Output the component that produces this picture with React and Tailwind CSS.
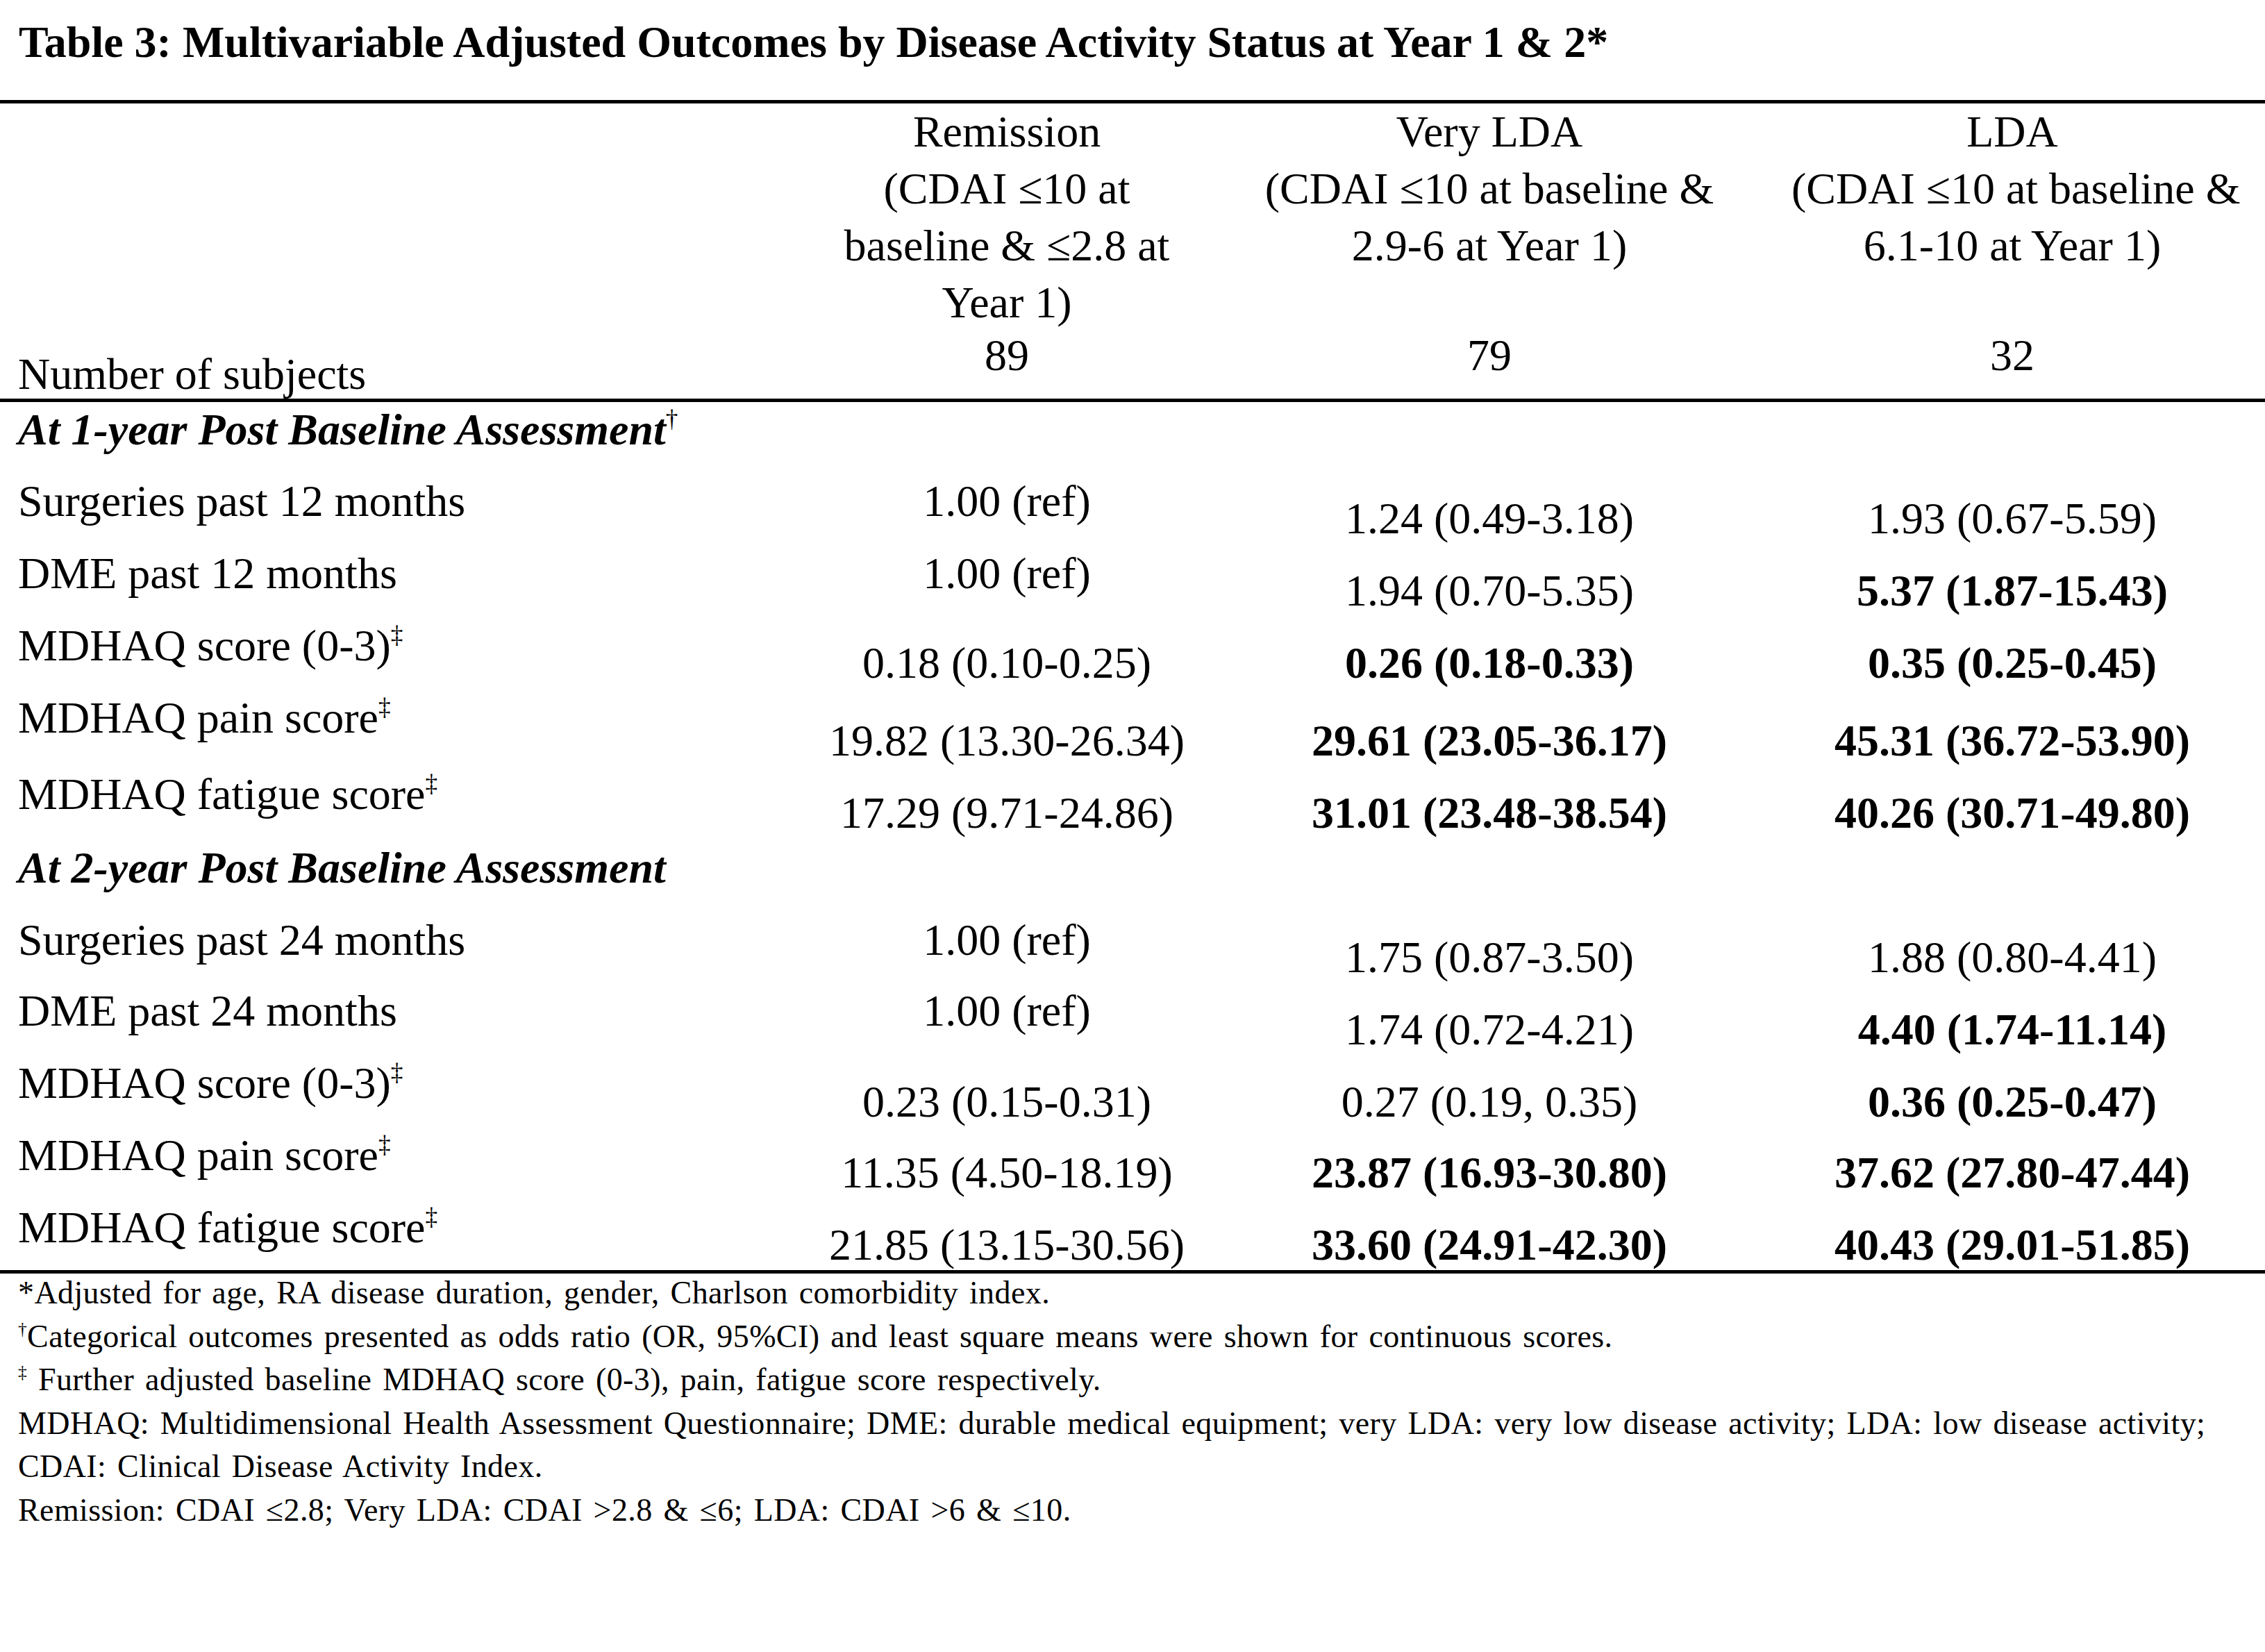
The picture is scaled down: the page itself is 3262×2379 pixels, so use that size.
const cols = "grid grid-cols-[1190px_520px_870px_636px]";

const Sup = ({ children }) => (
  <sup className="text-[0.55em] font-normal not-italic -top-[0.7em]">{children}</sup>
);

const year1 = [
  { label: "Surgeries past 12 months", h: "h-[104px]", vals: [["1.00 (ref)", "pt-0", false], ["1.24 (0.49-3.18)", "pt-[25px]", false], ["1.93 (0.67-5.59)", "pt-[25px]", false]] },
  { label: "DME past 12 months", h: "h-[104px]", vals: [["1.00 (ref)", "pt-0", false], ["1.94 (0.70-5.35)", "pt-[25px]", false], ["5.37 (1.87-15.43)", "pt-[25px]", true]] },
  { label: "MDHAQ score (0-3)", sup: "‡", h: "h-[104px]", vals: [["0.18 (0.10-0.25)", "pt-[25px]", false], ["0.26 (0.18-0.33)", "pt-[25px]", true], ["0.35 (0.25-0.45)", "pt-[25px]", true]] },
  { label: "MDHAQ pain score", sup: "‡", h: "h-[110px]", vals: [["19.82 (13.30-26.34)", "pt-[33px]", false], ["29.61 (23.05-36.17)", "pt-[33px]", true], ["45.31 (36.72-53.90)", "pt-[33px]", true]] },
  { label: "MDHAQ fatigue score", sup: "‡", h: "h-[106px]", vals: [["17.29 (9.71-24.86)", "pt-[27px]", false], ["31.01 (23.48-38.54)", "pt-[27px]", true], ["40.26 (30.71-49.80)", "pt-[27px]", true]] },
];

const year2 = [
  { label: "Surgeries past 24 months", h: "h-[102px]", vals: [["1.00 (ref)", "pt-0", false], ["1.75 (0.87-3.50)", "pt-[25px]", false], ["1.88 (0.80-4.41)", "pt-[25px]", false]] },
  { label: "DME past 24 months", h: "h-[104px]", vals: [["1.00 (ref)", "pt-0", false], ["1.74 (0.72-4.21)", "pt-[27px]", false], ["4.40 (1.74-11.14)", "pt-[27px]", true]] },
  { label: "MDHAQ score (0-3)", sup: "‡", h: "h-[104px]", vals: [["0.23 (0.15-0.31)", "pt-[27px]", false], ["0.27 (0.19, 0.35)", "pt-[27px]", false], ["0.36 (0.25-0.47)", "pt-[27px]", true]] },
  { label: "MDHAQ pain score", sup: "‡", h: "h-[104px]", vals: [["11.35 (4.50-18.19)", "pt-[25px]", false], ["23.87 (16.93-30.80)", "pt-[25px]", true], ["37.62 (27.80-47.44)", "pt-[25px]", true]] },
  { label: "MDHAQ fatigue score", sup: "‡", h: "h-[96px]", vals: [["21.85 (13.15-30.56)", "pt-[25px]", false], ["33.60 (24.91-42.30)", "pt-[25px]", true], ["40.43 (29.01-51.85)", "pt-[25px]", true]] },
];

const DataRow = ({ row }) => (
  <div className={`${cols} ${row.h}`}>
    <div className="pl-[26px] leading-[70px] whitespace-nowrap">
      {row.label}
      {row.sup && <Sup>{row.sup}</Sup>}
    </div>
    {row.vals.map(([t, pt, bold], i) => (
      <div key={i} className={`${pt} text-center leading-[70px] whitespace-nowrap ${bold ? "font-bold" : ""}`}>
        {t}
      </div>
    ))}
  </div>
);

const SectionHead = ({ children, h }) => (
  <div className={`${h} pl-[26px] leading-[70px] font-bold italic whitespace-nowrap`}>{children}</div>
);

export default function App() {
  return (
    <div className="w-[3262px] min-h-screen bg-white text-black font-['Liberation_Serif','Times_New_Roman',serif]">
      <h1 className="pt-[29px] pl-[27px] text-[64px] leading-none font-bold whitespace-nowrap">
        Table 3: Multivariable Adjusted Outcomes by Disease Activity Status at Year 1 &amp; 2*
      </h1>

      <div className="mt-[51px] border-t-[5px] border-b-[5px] border-black text-[64px]">
        <div className={`${cols} h-[328px] leading-[82px] text-center`}>
          <div></div>
          <div className="whitespace-nowrap">
            Remission
            <br />
            (CDAI ≤10 at
            <br />
            baseline &amp; ≤2.8 at
            <br />
            Year 1)
          </div>
          <div className="whitespace-nowrap">
            Very LDA
            <br />
            (CDAI ≤10 at baseline &amp;
            <br />
            2.9-6 at Year 1)
          </div>
          <div className="whitespace-nowrap">
            LDA
            <br />
            (CDAI ≤10 at baseline &amp;
            <br />
            6.1-10 at Year 1)
          </div>
        </div>
        <div className={`${cols} h-[97px] leading-[70px]`}>
          <div className="pl-[26px] self-end whitespace-nowrap">Number of subjects</div>
          <div className="text-center">89</div>
          <div className="text-center">79</div>
          <div className="text-center">32</div>
        </div>
      </div>

      <div className="pt-[5px] border-b-[5px] border-black text-[64px]">
        <SectionHead h="h-[103px]">
          At 1-year Post Baseline Assessment<Sup>†</Sup>
        </SectionHead>
        {year1.map((r, i) => (
          <DataRow key={i} row={r} />
        ))}
        <SectionHead h="h-[104px]">At 2-year Post Baseline Assessment</SectionHead>
        {year2.map((r, i) => (
          <DataRow key={i} row={r} />
        ))}
      </div>

      <div className="-mt-[3px] pl-[26px] text-[46px] leading-[62.6px] tracking-[0.4px] [word-spacing:4px] whitespace-nowrap">
        <p>*Adjusted for age, RA disease duration, gender, Charlson comorbidity index.</p>
        <p>
          <Sup>†</Sup>Categorical outcomes presented as odds ratio (OR, 95%CI) and least square means were shown for continuous scores.
        </p>
        <p>
          <Sup>‡</Sup> Further adjusted baseline MDHAQ score (0-3), pain, fatigue score respectively.
        </p>
        <p>
          MDHAQ: Multidimensional Health Assessment Questionnaire; DME: durable medical equipment; very LDA: very low disease activity; LDA: low disease activity;
        </p>
        <p>CDAI: Clinical Disease Activity Index.</p>
        <p>Remission: CDAI ≤2.8; Very LDA: CDAI &gt;2.8 &amp; ≤6; LDA: CDAI &gt;6 &amp; ≤10.</p>
      </div>
    </div>
  );
}
